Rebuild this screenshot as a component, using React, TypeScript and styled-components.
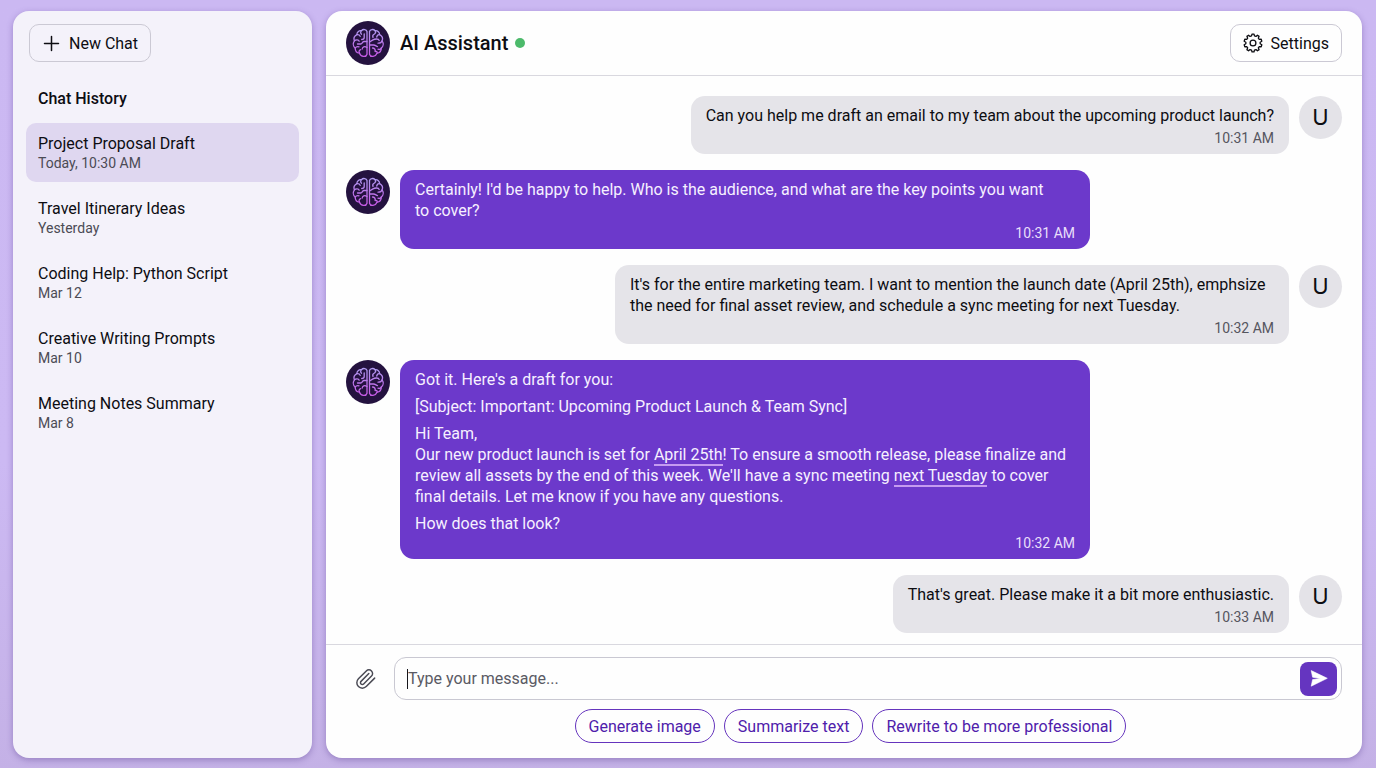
import React from 'react';
import styled, { createGlobalStyle, css } from 'styled-components';

const GlobalStyle = createGlobalStyle`
  * { box-sizing: border-box; }
  body {
    margin: 0;
    font-family: Roboto, "Liberation Sans", sans-serif;
    font-size: 16px;
    line-height: 21px;
    color: #0d0d12;
    background: #cdb9f1;
  }
  button, input { font: inherit; color: inherit; }
  h1, h2, p, ul { margin: 0; padding: 0; }
`;

const Page = styled.div`
  display: flex;
  gap: 14px;
  min-height: 100vh;
  padding: 11px 14px 11px 13px;
  background: linear-gradient(180deg, #cbb8f2 0%, #ccb9f3 60%, #c4b1e6 100%);
`;

const panel = css`
  border-radius: 16px;
  box-shadow: 0 2px 6px rgba(70, 40, 130, 0.35);
`;

const Sidebar = styled.aside`
  ${panel}
  flex: 0 0 299px;
  padding: 13px;
  background: #f4f2fa;
`;

const Main = styled.main`
  ${panel}
  flex: 1;
  min-width: 0;
  display: flex;
  flex-direction: column;
  background: #fefefe;
`;

const OutlineButton = styled.button<{ $inset?: boolean }>`
  display: inline-flex;
  align-items: center;
  gap: 8px;
  height: 38px;
  margin-left: ${(p) => (p.$inset ? '3px' : '0')};
  padding: 0 12px;
  border: 1px solid #cbc9d4;
  border-radius: 10px;
  background: transparent;
  cursor: pointer;
`;

const HistoryTitle = styled.h2`
  margin: 26px 12px 14px;
  font-size: 16px;
  font-weight: 500;
`;

const HistoryList = styled.ul`
  display: flex;
  flex-direction: column;
  gap: 6px;
  list-style: none;
`;

const HistoryLink = styled.a<{ $active?: boolean }>`
  display: block;
  padding: 10px 12px;
  border-radius: 10px;
  background: ${(p) => (p.$active ? '#dfd7f0' : 'transparent')};
  color: inherit;
  text-decoration: none;
`;

const HistoryName = styled.span`
  display: block;
`;

const HistoryDate = styled.span`
  display: block;
  font-size: 14px;
  line-height: 18px;
  color: #4b4b55;
`;

const Header = styled.header`
  display: flex;
  align-items: center;
  height: 65px;
  padding: 0 20px;
  border-bottom: 1px solid #d9d8df;
`;

const AssistantName = styled.h1`
  margin-left: 10px;
  font-size: 20px;
  line-height: 24px;
  font-weight: 500;
`;

const OnlineDot = styled.span`
  width: 10px;
  height: 10px;
  margin: 0 auto 0 7px;
  border-radius: 50%;
  background: #4cba6b;
`;

const Messages = styled.section`
  flex: 1;
  display: flex;
  flex-direction: column;
  gap: 16px;
  padding: 20px 20px 11px;
`;

const Row = styled.article<{ $own?: boolean }>`
  display: flex;
  flex-direction: ${(p) => (p.$own ? 'row-reverse' : 'row')};
  align-items: flex-start;
  gap: 10px;
`;

const UserAvatar = styled.span`
  flex: none;
  display: grid;
  place-items: center;
  width: 43px;
  height: 43px;
  border-radius: 50%;
  background: #e4e3e8;
  font-family: Inter, sans-serif;
  font-size: 22px;
`;

const BrainSvg = styled.svg`
  flex: none;
  display: block;
  width: 44px;
  height: 44px;
`;

const Bubble = styled.div<{ $own?: boolean }>`
  min-width: 0;
  max-width: ${(p) => (p.$own ? '674px' : '690px')};
  padding: 9px 15px 7px;
  border-radius: 14px;
  background: ${(p) => (p.$own ? '#e5e4e9' : '#6c39cb')};
  color: ${(p) => (p.$own ? '#0d0d12' : '#f6f0ff')};
`;

const Paragraph = styled.p`
  & + & { margin-top: 6px; }
`;

const Time = styled.time<{ $own?: boolean; $tight?: boolean }>`
  display: block;
  margin-top: ${(p) => (p.$tight ? '0' : '3px')};
  font-size: 14px;
  line-height: 18px;
  text-align: right;
  color: ${(p) => (p.$own ? '#55555e' : '#e9dffa')};
`;

const Marked = styled.span`
  border-bottom: 2px solid #c59bf0;
`;

const Footer = styled.footer`
  padding: 12px 20px 15px;
  border-top: 1px solid #d9d8df;
`;

const Composer = styled.form`
  display: flex;
  align-items: center;
  gap: 17px;
`;

const AttachButton = styled.button`
  display: grid;
  place-items: center;
  margin-left: 9px;
  padding: 0;
  border: 0;
  background: none;
  color: #4a4a54;
  cursor: pointer;
`;

const InputFrame = styled.div`
  flex: 1;
  display: flex;
  align-items: center;
  height: 43px;
  padding: 0 4px 0 12px;
  border: 1px solid #c9c8d2;
  border-radius: 12px;
`;

const Caret = styled.span`
  width: 1px;
  height: 20px;
  background: #16161c;
`;

const MessageInput = styled.input`
  flex: 1;
  min-width: 0;
  padding: 0;
  border: 0;
  outline: 0;
  background: none;
  &::placeholder { color: #5a5a64; opacity: 1; }
`;

const SendButton = styled.button`
  display: grid;
  place-items: center;
  width: 37px;
  height: 34px;
  padding: 0;
  border: 0;
  border-radius: 8px;
  background: #6535c0;
  cursor: pointer;
`;

const Suggestions = styled.div`
  display: flex;
  justify-content: center;
  gap: 9px;
  margin: 9px 0 0 13px;
`;

const Chip = styled.button`
  height: 34px;
  padding: 0 13px;
  border: 1px solid #6534bd;
  border-radius: 17px;
  background: transparent;
  color: #4f20ab;
  cursor: pointer;
`;

function BrainAvatar({ id }: { id: string }) {
  return (
    <BrainSvg viewBox="0 0 44 44" aria-hidden="true">
      <defs>
        <linearGradient id={id} gradientUnits="userSpaceOnUse" x1="0" y1="9" x2="0" y2="35">
          <stop offset="0" stopColor="#b09af0" />
          <stop offset="1" stopColor="#c65ae6" />
        </linearGradient>
      </defs>
      <circle cx="22" cy="22" r="22" fill="#24123f" />
      <g fill="none" stroke={`url(#${id})`} strokeWidth="1.3" strokeLinecap="round" strokeLinejoin="round">
        <path d="M21 10.5C20.4 8.4 17.2 7.7 15.4 9.7C12.8 9.4 10.8 11.3 10.9 13.6C8.4 15 7.4 17.5 8.4 19.8C6.8 22.2 7 25.3 9.2 27C9.2 30 11 32 13.5 32.2C15 36 20 36.6 21 33.2Z" />
        <path d="M23.5 10.5C24.1 8.4 27.3 7.7 29.1 9.7C31.7 9.4 33.7 11.3 33.6 13.6C36.1 15 37.1 17.5 36.1 19.8C37.7 22.2 37.5 25.3 35.3 27C35.3 30 33.5 32 31 32.2C29.5 36 24.5 36.6 23.5 33.2Z" />
        <path d="M15.4 9.7C14.3 11 14.5 12.4 15.5 13.2M10.9 13.6C12.5 13.4 13.8 14.2 14.2 15.4M18.2 13V16.5C18.2 18 17 18.5 15.7 18.5M8.4 19.8C10 18.4 12.5 18.5 13.2 20.2M21 20.5H18C16.5 20.5 16.5 22.5 15 23H11.5M9.2 27C10 25.8 11.5 25.3 13 25.8M21 26.5C18.5 24.8 16.5 26 16.2 28M13.5 32.2C12.5 30.5 13.2 29.2 14.6 28.7" />
        <path d="M29.1 9.7C30 11 29.5 12.3 28.5 13C27 13.5 26.5 15 27 16.5M33.6 13.6C32 13.4 31 14.5 30.7 16M23.5 21L27 18.9C29 17.7 32.5 17.5 33.2 19.5M36.1 19.8C35.5 21.6 34 22.3 32 22.2M23.5 24H27.5C29.5 24 30 25.2 31.5 25.6M35.3 27C34.7 28.4 33.2 28.7 32 28.2M26.5 27C28.5 27 29.5 28.5 29.1 30.5M31 32.2C31.5 31 30.8 29.8 29.1 30.5" />
      </g>
    </BrainSvg>
  );
}

const PlusIcon = () => (
  <svg width="19" height="19" viewBox="0 0 19 19" fill="none" stroke="currentColor" strokeWidth="1.5" strokeLinecap="round" aria-hidden="true">
    <path d="M9.5 2.5v14M2.5 9.5h14" />
  </svg>
);

const teeth = 10;
const gearPath = (() => {
  const points: string[] = [];
  const step = (Math.PI * 2) / teeth;
  for (let i = 0; i < teeth; i += 1) {
    [[-0.32, 7.2], [-0.18, 9], [0.18, 9], [0.32, 7.2]].forEach(([offset, radius]) => {
      const angle = (i + offset) * step - Math.PI / 2;
      points.push(`${(10 + radius * Math.cos(angle)).toFixed(2)} ${(10 + radius * Math.sin(angle)).toFixed(2)}`);
    });
  }
  return `M${points.join('L')}Z`;
})();

const GearIcon = () => (
  <svg width="20" height="20" viewBox="0 0 20 20" fill="none" stroke="currentColor" strokeWidth="1.3" strokeLinejoin="round" aria-hidden="true">
    <path d={gearPath} />
    <circle cx="10" cy="10" r="2.9" />
  </svg>
);

const ClipIcon = () => (
  <svg width="22" height="24" viewBox="0 0 24 24" fill="none" stroke="currentColor" strokeWidth="1.6" strokeLinecap="round" strokeLinejoin="round" aria-hidden="true">
    <path d="m21.44 11.05-9.19 9.19a6 6 0 0 1-8.49-8.49l8.57-8.57A4 4 0 1 1 18 8.84l-8.59 8.57a2 2 0 0 1-2.83-2.83l8.49-8.48" />
  </svg>
);

const SendIcon = () => (
  <svg width="18" height="17" viewBox="0 0 18 17" aria-hidden="true">
    <path d="M1.2 .6L17.3 8.3L1.2 16.2L2.6 9.6L10.5 8.4L2.6 7.2Z" fill="#fff" stroke="#fff" strokeWidth=".6" strokeLinejoin="round" />
  </svg>
);

const chats = [
  { name: 'Project Proposal Draft', date: 'Today, 10:30 AM', active: true },
  { name: 'Travel Itinerary Ideas', date: 'Yesterday' },
  { name: 'Coding Help: Python Script', date: 'Mar 12' },
  { name: 'Creative Writing Prompts', date: 'Mar 10' },
  { name: 'Meeting Notes Summary', date: 'Mar 8' },
];

const messages: { own?: boolean; time: string; body: React.ReactNode[] }[] = [
  { own: true, time: '10:31 AM', body: ['Can you help me draft an email to my team about the upcoming product launch?'] },
  { time: '10:31 AM', body: ["Certainly! I'd be happy to help. Who is the audience, and what are the key points you want to\u00a0cover?"] },
  {
    own: true,
    time: '10:32 AM',
    body: ["It's for the entire marketing team. I want to mention the launch date (April 25th), emphsize the need for final asset review, and schedule a sync meeting for next Tuesday."],
  },
  {
    time: '10:32 AM',
    body: [
      "Got it. Here's a draft for you:",
      '[Subject: Important: Upcoming Product Launch & Team Sync]',
      <>
        Hi Team,
        <br />
        Our new product launch is set for <Marked>April 25th</Marked>! To ensure a smooth release, please finalize and
        review all assets by the end of this week. We'll have a sync meeting <Marked>next Tuesday</Marked> to cover
        final details. Let me know if you have any questions.
      </>,
      'How does that look?',
    ],
  },
  { own: true, time: '10:33 AM', body: ["That's great. Please make it a bit more enthusiastic."] },
];

const suggestions = ['Generate image', 'Summarize text', 'Rewrite to be more professional'];

export default function App() {
  return (
    <>
      <GlobalStyle />
      <Page>
        <Sidebar>
          <OutlineButton type="button" $inset>
            <PlusIcon />
            New Chat
          </OutlineButton>
          <HistoryTitle>Chat History</HistoryTitle>
          <HistoryList>
            {chats.map((chat) => (
              <li key={chat.name}>
                <HistoryLink href="#" $active={chat.active}>
                  <HistoryName>{chat.name}</HistoryName>
                  <HistoryDate>{chat.date}</HistoryDate>
                </HistoryLink>
              </li>
            ))}
          </HistoryList>
        </Sidebar>
        <Main>
          <Header>
            <BrainAvatar id="brain-header" />
            <AssistantName>AI Assistant</AssistantName>
            <OnlineDot />
            <OutlineButton type="button">
              <GearIcon />
              Settings
            </OutlineButton>
          </Header>
          <Messages>
            {messages.map((message, index) => (
              <Row key={index} $own={message.own}>
                {message.own ? <UserAvatar>U</UserAvatar> : <BrainAvatar id={`brain-${index}`} />}
                <Bubble $own={message.own}>
                  {message.body.map((part, i) => (
                    <Paragraph key={i}>{part}</Paragraph>
                  ))}
                  <Time $own={message.own} $tight={message.body.length > 1}>{message.time}</Time>
                </Bubble>
              </Row>
            ))}
          </Messages>
          <Footer>
            <Composer onSubmit={(event) => event.preventDefault()}>
              <AttachButton type="button" aria-label="Attach a file">
                <ClipIcon />
              </AttachButton>
              <InputFrame>
                <Caret />
                <MessageInput type="text" aria-label="Message" placeholder="Type your message..." />
                <SendButton type="submit" aria-label="Send">
                  <SendIcon />
                </SendButton>
              </InputFrame>
            </Composer>
            <Suggestions>
              {suggestions.map((label) => (
                <Chip key={label} type="button">{label}</Chip>
              ))}
            </Suggestions>
          </Footer>
        </Main>
      </Page>
    </>
  );
}
